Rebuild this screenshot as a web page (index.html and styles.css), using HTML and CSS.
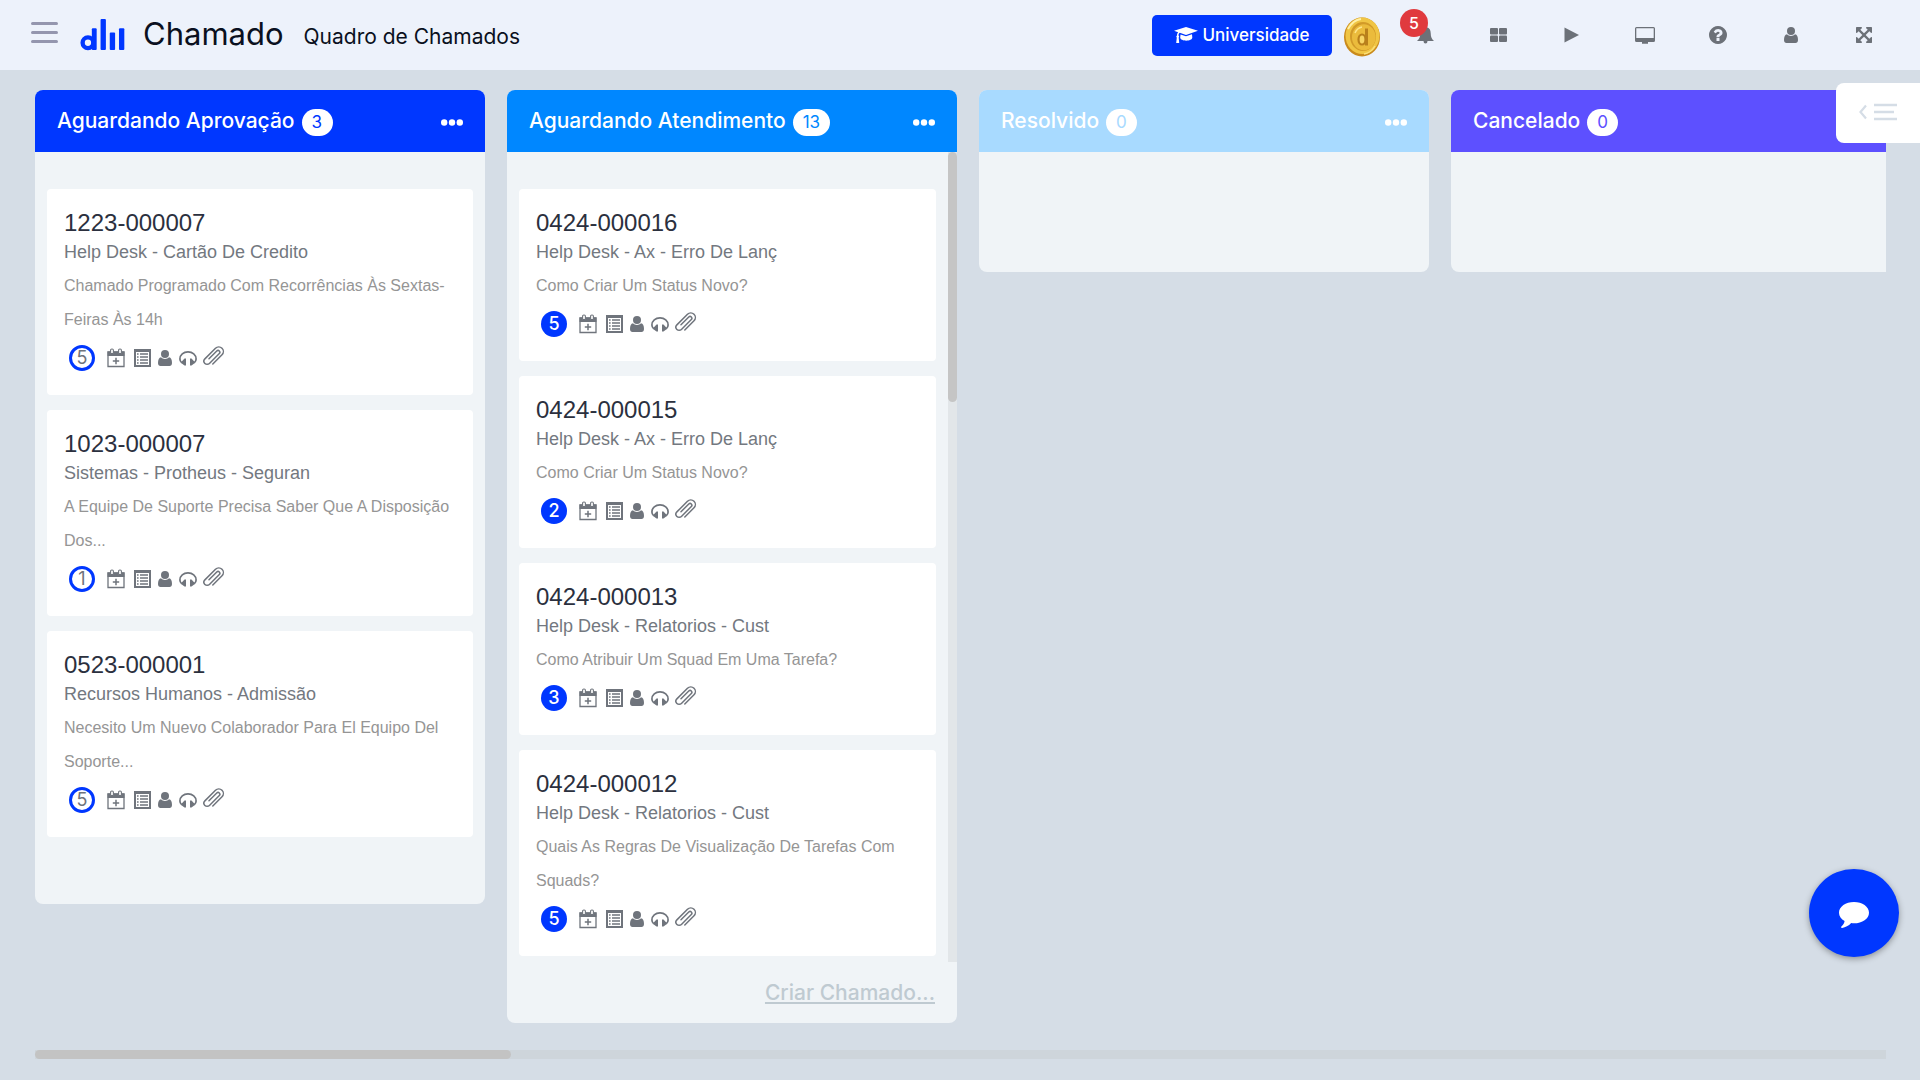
FILE: index.html
```html
<!DOCTYPE html>
<html lang="pt-BR">
<head>
<meta charset="utf-8">
<meta name="viewport" content="width=device-width, initial-scale=1">
<title>Chamado - Quadro de Chamados</title>
<link rel="stylesheet" href="styles.css">
</head>
<body>
<svg class="sprite" aria-hidden="true">
  <symbol id="i-calendar" viewBox="0 0 18 20"><path fill="none" stroke="currentColor" stroke-width="1.3" d="M1 4h16v14.5H1z"/><path fill="currentColor" d="M.5 3.5h17V8H.5z"/><rect x="3.6" y="1" width="2.8" height="4.6" rx="1.2" fill="#fff" stroke="currentColor" stroke-width="1.1"/><rect x="11.6" y="1" width="2.8" height="4.6" rx="1.2" fill="#fff" stroke="currentColor" stroke-width="1.1"/><path stroke="currentColor" stroke-width="1.5" d="M9 9.8v6.4M5.800 13h6.400"/></symbol>
  <symbol id="i-list" viewBox="0 0 17 18"><path fill="currentColor" fill-rule="evenodd" d="M0 0h17v18H0zM2 3v13h13V3z"/><path stroke="currentColor" stroke-width="1.6" d="M3 5h1.6M3 8h1.6M3 11h1.6M3 14h1.6M6 5h8M6 8h8M6 11h8M6 14h8"/></symbol>
  <symbol id="i-user" viewBox="0 0 14 16"><circle cx="7" cy="4" r="4" fill="currentColor"/><path fill="currentColor" d="M3 7.3C4 8.4 5.4 9 7 9s3-.6 4-1.700c2 .4 3 2.500 3 5.700 0 1.800-1 3-2.500 3h-9C1 16 0 14.800 0 13c0-3.200 1-5.300 3-5.700z"/></symbol>
  <symbol id="i-headset" viewBox="0 0 18 15"><path fill="none" stroke="currentColor" stroke-width="1.700" d="M2.800 11.800C1.500 10.800.9 9.500.9 8 .9 3.800 4.500.9 9 .9s8.100 2.900 8.100 7.100c0 1.500-.6 2.800-1.900 3.800"/><path fill="currentColor" d="M5.500 7.500H7v7H5.500L2.500 12.300v-1.600zM12.500 7.500H11v7h1.500l3-2.200v-1.600z"/></symbol>
  <symbol id="i-clip" viewBox="0 0 22 20"><path transform="translate(10.800 10.500) rotate(-45)" fill="none" stroke="currentColor" stroke-width="1.500" stroke-linecap="round" d="M-6 4.600H7A4.600 4.600 0 0 0 7-4.600H-8A3.200 3.200 0 0 0-8 1.800H6A1.800 1.800 0 0 0 6-1.800H-5"/></symbol>
  <symbol id="i-dots" viewBox="0 0 22 7"><circle cx="3.200" cy="3.500" r="3.200" fill="currentColor"/><circle cx="11" cy="3.500" r="3.200" fill="currentColor"/><circle cx="18.800" cy="3.500" r="3.200" fill="currentColor"/></symbol>
</svg>

<header class="topbar">
  <button class="menu" type="button" aria-label="Menu"><span></span><span></span><span></span></button>
  <svg class="logo" viewBox="0 0 45 33" aria-hidden="true"><circle cx="7.500" cy="24.500" r="5.500" fill="none" stroke="#0037ff" stroke-width="4.500"/><g fill="#0037ff"><rect x="11.500" y="9.500" width="5" height="22.500" rx="1"/><rect x="20.500" y="0" width="5.500" height="32" rx="1"/><rect x="30" y="14" width="5.500" height="18" rx="1"/><rect x="39.500" y="9.500" width="5.500" height="22.500" rx="1"/></g></svg>
  <h1 class="title">Chamado</h1>
  <span class="subtitle">Quadro de Chamados</span>
  <nav class="actions">
    <button class="university" type="button">
      <svg width="24" height="16" viewBox="0 0 24 16" aria-hidden="true"><path fill="currentColor" d="M12 0 24 3.800 12 7.900 5.800 5.800C4.800 6.500 4.500 7.300 4.500 8.600c.8.600.8 1.400.2 1.900L5.200 16H2.200l.6-5.500c-.7-.6-.6-1.500.2-1.900 0-1.500.3-2.500 1.100-3.300L0 3.800zM6.500 7.500 12 9.300l6-2 .3 3.200c-.3 4.200-11.800 4.200-12.100 0z"/></svg>
      Universidade
    </button>
    <svg class="coin" viewBox="0 0 36 40" aria-hidden="true"><ellipse cx="18" cy="20" rx="18" ry="19.500" fill="#c98a1c"/><ellipse cx="18.500" cy="18.800" rx="17" ry="18.300" fill="#f0c544"/><ellipse cx="19" cy="19.500" rx="13" ry="14.500" fill="#d29a28"/><ellipse cx="19.800" cy="20.300" rx="11.800" ry="13" fill="#ebbb3c"/><path d="M4 12Q9 3 17 2" fill="none" stroke="#fff0a6" stroke-width="2"/><path d="M31 29Q27 36 20 37" fill="none" stroke="#fbe07a" stroke-width="1.500"/><ellipse cx="18" cy="22.500" rx="3.500" ry="5" fill="#f7d565" stroke="#b9801c" stroke-width="2.200"/><path d="M22.500 11.500v17" stroke="#b9801c" stroke-width="3"/><path d="M11 16q2-5 7-6" fill="none" stroke="#ffe58a" stroke-width="1.500"/></svg>
    <button class="tool bell" type="button" aria-label="Notificações">
      <svg width="17" height="18" viewBox="0 0 17 18"><path fill="currentColor" d="M8.500 0c.8 0 1.300.6 1.300 1.300C12.500 2 13.600 4 13.700 7c.1 4 1 6 3.300 8H10.500a2 2.600 0 0 1-4 0H0c2.300-2 3.200-4 3.300-8 .1-3 1.200-5 3.900-5.700C7.200.6 7.700 0 8.500 0z"/></svg>
      <span class="alert">5</span>
    </button>
    <button class="tool" type="button" aria-label="Painéis"><svg width="17" height="14" viewBox="0 0 17 14"><g fill="currentColor"><rect width="8" height="6.500" rx="1"/><rect x="9" width="8" height="6.500" rx="1"/><rect y="7.500" width="8" height="6.500" rx="1"/><rect x="9" y="7.500" width="8" height="6.500" rx="1"/></g></svg></button>
    <button class="tool" type="button" aria-label="Iniciar"><svg width="15" height="16" viewBox="0 0 15 16"><path fill="currentColor" d="M.5.500 15 8 .5 15.500z"/></svg></button>
    <button class="tool" type="button" aria-label="Monitor"><svg width="20" height="17" viewBox="0 0 20 17"><path fill="currentColor" fill-rule="evenodd" d="M1.500 0h17A1.500 1.500 0 0 1 20 1.500v12a1.500 1.500 0 0 1-1.500 1.500H13v1.800H7V15H1.500A1.500 1.500 0 0 1 0 13.500v-12A1.500 1.500 0 0 1 1.500 0zM1.300 1.300v9.700h17.400V1.300z"/></svg></button>
    <button class="tool" type="button" aria-label="Ajuda"><svg width="18" height="18" viewBox="128 128 1536 1536"><path fill="currentColor" d="M1024 1376v-192q0-14-9-23t-23-9h-192q-14 0-23 9t-9 23v192q0 14 9 23t23 9h192q14 0 23-9t9-23zm256-672q0-88-55.500-163t-138.500-116-170-41q-243 0-371 213-15 24 8 42l132 100q7 6 19 6 16 0 25-12 53-68 86-92 34-24 86-24 48 0 85.500 26t37.500 59q0 38-20 61t-68 45q-63 28-115.500 86.500t-52.500 125.500v36q0 14 9 23t23 9h192q14 0 23-9t9-23q0-19 21.500-49.500t54.500-49.500q32-18 49-28.500t46-35 44.500-48 28-60.500 12.500-81zm384 192q0 209-103 385.500t-279.500 279.500-385.500 103-385.500-103-279.500-279.500-103-385.500 103-385.500 279.500-279.500 385.500-103 385.500 103 279.500 279.500 103 385.500z"/></svg></button>
    <button class="tool" type="button" aria-label="Perfil"><svg width="14" height="16"><use href="#i-user"/></svg></button>
    <button class="tool" type="button" aria-label="Tela cheia"><svg width="16" height="16" viewBox="128 128 1536 1536"><path fill="currentColor" d="M1411 541l-355 355 355 355 144-144q29-31 70-14 39 17 39 59v448q0 26-19 45t-45 19h-448q-42 0-59-40-17-39 14-69l144-144-355-355-355 355 144 144q31 30 14 69-17 40-59 40h-448q-26 0-45-19t-19-45v-448q0-42 40-59 39-17 69 14l144 144 355-355-355-355-144 144q-19 19-45 19-12 0-24-5-40-17-40-59v-448q0-26 19-45t45-19h448q42 0 59 40 17 39-14 69l-144 144 355 355 355-355-144-144q-31-30-14-69 17-40 59-40h448q26 0 45 19t19 45v448q0 42-39 59-13 5-25 5-26 0-45-19z"/></svg></button>
  </nav>
</header>

<main class="board">
  <div class="columns">
    <section class="column approval">
      <header class="column-head"><h2>Aguardando Aprovação</h2><span class="count">3</span><button class="more" type="button" aria-label="Opções"><svg><use href="#i-dots"/></svg></button></header>
      <div class="list open">
        <article class="card">
          <h3>1223-000007</h3><p class="kind">Help Desk - Cartão De Credito</p><p class="text">Chamado Programado Com Recorrências Às Sextas-Feiras Às 14h</p>
          <div class="meta"><span class="level ring">5</span><svg class="calendar"><use href="#i-calendar"/></svg><svg class="details"><use href="#i-list"/></svg><svg class="person"><use href="#i-user"/></svg><svg class="headset"><use href="#i-headset"/></svg><svg class="clip"><use href="#i-clip"/></svg></div>
        </article>
        <article class="card">
          <h3>1023-000007</h3><p class="kind">Sistemas - Protheus - Seguran</p><p class="text">A Equipe De Suporte Precisa Saber Que A Disposição Dos...</p>
          <div class="meta"><span class="level ring">1</span><svg class="calendar"><use href="#i-calendar"/></svg><svg class="details"><use href="#i-list"/></svg><svg class="person"><use href="#i-user"/></svg><svg class="headset"><use href="#i-headset"/></svg><svg class="clip"><use href="#i-clip"/></svg></div>
        </article>
        <article class="card">
          <h3>0523-000001</h3><p class="kind">Recursos Humanos - Admissão</p><p class="text">Necesito Um Nuevo Colaborador Para El Equipo Del Soporte...</p>
          <div class="meta"><span class="level ring">5</span><svg class="calendar"><use href="#i-calendar"/></svg><svg class="details"><use href="#i-list"/></svg><svg class="person"><use href="#i-user"/></svg><svg class="headset"><use href="#i-headset"/></svg><svg class="clip"><use href="#i-clip"/></svg></div>
        </article>
      </div>
    </section>

    <section class="column service">
      <header class="column-head"><h2>Aguardando Atendimento</h2><span class="count">13</span><button class="more" type="button" aria-label="Opções"><svg><use href="#i-dots"/></svg></button></header>
      <div class="scroll">
        <div class="list">
          <article class="card">
            <h3>0424-000016</h3><p class="kind">Help Desk - Ax - Erro De Lanç</p><p class="text">Como Criar Um Status Novo?</p>
            <div class="meta"><span class="level">5</span><svg class="calendar"><use href="#i-calendar"/></svg><svg class="details"><use href="#i-list"/></svg><svg class="person"><use href="#i-user"/></svg><svg class="headset"><use href="#i-headset"/></svg><svg class="clip"><use href="#i-clip"/></svg></div>
          </article>
          <article class="card">
            <h3>0424-000015</h3><p class="kind">Help Desk - Ax - Erro De Lanç</p><p class="text">Como Criar Um Status Novo?</p>
            <div class="meta"><span class="level">2</span><svg class="calendar"><use href="#i-calendar"/></svg><svg class="details"><use href="#i-list"/></svg><svg class="person"><use href="#i-user"/></svg><svg class="headset"><use href="#i-headset"/></svg><svg class="clip"><use href="#i-clip"/></svg></div>
          </article>
          <article class="card">
            <h3>0424-000013</h3><p class="kind">Help Desk - Relatorios - Cust</p><p class="text">Como Atribuir Um Squad Em Uma Tarefa?</p>
            <div class="meta"><span class="level">3</span><svg class="calendar"><use href="#i-calendar"/></svg><svg class="details"><use href="#i-list"/></svg><svg class="person"><use href="#i-user"/></svg><svg class="headset"><use href="#i-headset"/></svg><svg class="clip"><use href="#i-clip"/></svg></div>
          </article>
          <article class="card">
            <h3>0424-000012</h3><p class="kind">Help Desk - Relatorios - Cust</p><p class="text">Quais As Regras De Visualização De Tarefas Com Squads?</p>
            <div class="meta"><span class="level">5</span><svg class="calendar"><use href="#i-calendar"/></svg><svg class="details"><use href="#i-list"/></svg><svg class="person"><use href="#i-user"/></svg><svg class="headset"><use href="#i-headset"/></svg><svg class="clip"><use href="#i-clip"/></svg></div>
          </article>
        </div>
        <div class="track"><div class="thumb"></div></div>
      </div>
      <footer class="column-foot"><a href="#novo">Criar Chamado...</a></footer>
    </section>

    <section class="column solved">
      <header class="column-head"><h2>Resolvido</h2><span class="count">0</span><button class="more" type="button" aria-label="Opções"><svg><use href="#i-dots"/></svg></button></header>
      <div class="empty"></div>
    </section>

    <section class="column canceled">
      <header class="column-head"><h2>Cancelado</h2><span class="count">0</span><button class="more" type="button" aria-label="Opções"><svg><use href="#i-dots"/></svg></button></header>
      <div class="empty"></div>
    </section>
  </div>
  <div class="hbar"><div class="hthumb"></div></div>
</main>

<button class="drawer" type="button" aria-label="Abrir painel"><svg width="38" height="18" viewBox="0 0 38 18" fill="none" stroke="#d5dde6" stroke-width="2.500"><path stroke-width="2.200" d="M7 2.500 1.500 9 7 15.500"/><path d="M15 2h23M15 9h20M15 16h23"/></svg></button>
<button class="chat" type="button" aria-label="Chat"><svg width="30" height="26" viewBox="0 0 30 26"><path fill="#fff" d="M15 0c8.300 0 15 4.700 15 10.700S23.300 21.300 15 21.300c-1 0-2 0-2.800-.2C9.500 24 6.500 25.400 3.200 26c-1 .1-1.400-.8-.8-1.500 1.800-1.700 2.900-3.300 3.200-5.500C2.200 17.100 0 14 0 10.700 0 4.700 6.700 0 15 0z"/></svg></button>
</body>
</html>
```
FILE: styles.css
```css
* { box-sizing: border-box; }
body {
  margin: 0;
  min-height: 100vh;
  background: #d5dde6;
  font-family: "Liberation Sans", Arial, sans-serif;
  overflow-x: hidden;
}
h1, h2, h3, p { margin: 0; font-weight: 400; }
button { border: 0; padding: 0; background: none; color: inherit; font: inherit; cursor: pointer; }
svg { display: block; flex: none; }
.sprite { position: absolute; width: 0; height: 0; }

.topbar {
  display: flex;
  align-items: center;
  height: 70px;
  padding: 0 20px 0 31px;
  background: #edf2fb;
  color: #0a1020;
  font-family: Inter, sans-serif;
}
.menu { display: flex; flex-direction: column; gap: 6px; width: 27px; margin-right: 22px; padding-bottom: 5px; }
.menu span { height: 3px; border-radius: 2px; background: #9496ae; }
.logo { width: 45px; height: 33px; margin-right: 18px; padding-bottom: 1px; }
.title { font-size: 31px; line-height: 40px; margin-right: 20px; padding-bottom: 2px; }
.subtitle { font-size: 21px; line-height: 28px; padding-top: 3px; }
.actions { display: flex; align-items: center; margin-left: auto; color: #6c7178; }
.university {
  display: flex;
  align-items: center;
  justify-content: center;
  gap: 4px;
  width: 180px;
  height: 41px;
  margin-right: 12px;
  border-radius: 5px;
  background: #0037ff;
  color: #fff;
  font-size: 17px;
  font-weight: 500;
}
.coin { width: 36px; height: 40px; margin: 4px 9px 0 0; }
.tool { display: flex; align-items: center; justify-content: center; position: relative; width: 73px; height: 40px; }
.alert {
  position: absolute;
  left: 11px;
  top: -6px;
  width: 28px;
  height: 28px;
  border-radius: 50%;
  background: #e03a3e;
  color: #fff;
  font-size: 16px;
  font-weight: 500;
  line-height: 28px;
  text-align: center;
}

.board { padding: 20px 34px 21px 35px; }
.columns { display: flex; align-items: flex-start; gap: 22px; min-height: 960px; overflow: hidden; }
.column { flex: 0 0 450px; overflow: hidden; border-radius: 8px; background: #f0f4f7; }
.column-head {
  display: flex;
  align-items: center;
  height: 62px;
  padding: 0 22px;
  background: var(--tone);
  color: #fff;
  font-family: Inter, sans-serif;
}
.approval { --tone: #0037ff; }
.service { --tone: #0087ff; }
.solved { --tone: #a8daff; }
.canceled { --tone: #5d50ff; }
.column-head h2 { font-size: 21px; line-height: 28px; font-weight: 500; margin-right: 7px; }
.count {
  min-width: 31px;
  height: 27px;
  margin-top: 2px;
  padding: 0 10px;
  border-radius: 14px;
  background: #fff;
  color: var(--tone);
  font-size: 17px;
  line-height: 27px;
}
.more { margin-left: auto; padding-top: 2px; }
.more svg { width: 22px; height: 7px; }

.list { display: flex; flex: 1; flex-direction: column; gap: 15px; padding: 37px 12px 6px; }
.list.open { padding-bottom: 67px; }
.scroll { display: flex; }
.track { width: 9px; background: #e2e6e9; }
.thumb { height: 250px; border-radius: 5px; background: #c5c5c5; }
.card { padding: 18px 17px 16px; border-radius: 4px; background: #fff; }
.card h3 { color: #2b303e; font-size: 24px; line-height: 32px; }
.kind { color: #737880; font-size: 18px; line-height: 27px; margin-bottom: 3px; }
.text { color: #959595; font-size: 16px; line-height: 34px; }
.meta { display: flex; align-items: center; height: 42px; padding-left: 5px; color: #6f747c; }
.level {
  width: 26px;
  height: 26px;
  margin-right: 12px;
  border-radius: 50%;
  background: #0037ff;
  color: #fff;
  font: 500 18px/26px Inter, sans-serif;
  text-align: center;
}
.level.ring { border: 3px solid #0037ff; background: #fff; color: #6f747c; font-weight: 400; line-height: 20px; }
.calendar { width: 18px; height: 20px; margin-right: 9px; }
.details { width: 17px; height: 18px; margin-right: 7px; }
.person { width: 14px; height: 16px; margin-right: 7px; }
.headset { width: 18px; height: 15px; margin-right: 6px; }
.clip { width: 22px; height: 20px; margin-bottom: 4px; }
.column-foot { display: flex; align-items: center; justify-content: flex-end; height: 61px; padding-right: 22px; }
.column-foot a { color: #bfcad1; font: 500 21px/28px Inter, sans-serif; }
.empty { height: 120px; }

.hbar { height: 9px; background: #ced5db; }
.hthumb { width: 476px; max-width: 100%; height: 9px; border-radius: 5px; background: #c3c3c3; }

.drawer {
  position: absolute;
  right: 0;
  top: 83px;
  display: flex;
  align-items: center;
  width: 84px;
  height: 60px;
  padding: 0 0 3px 23px;
  border-radius: 8px 0 0 8px;
  background: #fff;
}
.chat {
  position: fixed;
  right: 21px;
  bottom: 123px;
  display: flex;
  align-items: center;
  justify-content: center;
  width: 90px;
  height: 88px;
  padding-top: 4px;
  border-radius: 50%;
  background: #0037ff;
  box-shadow: 0 2px 6px rgba(0, 0, 0, .35);
}
```
